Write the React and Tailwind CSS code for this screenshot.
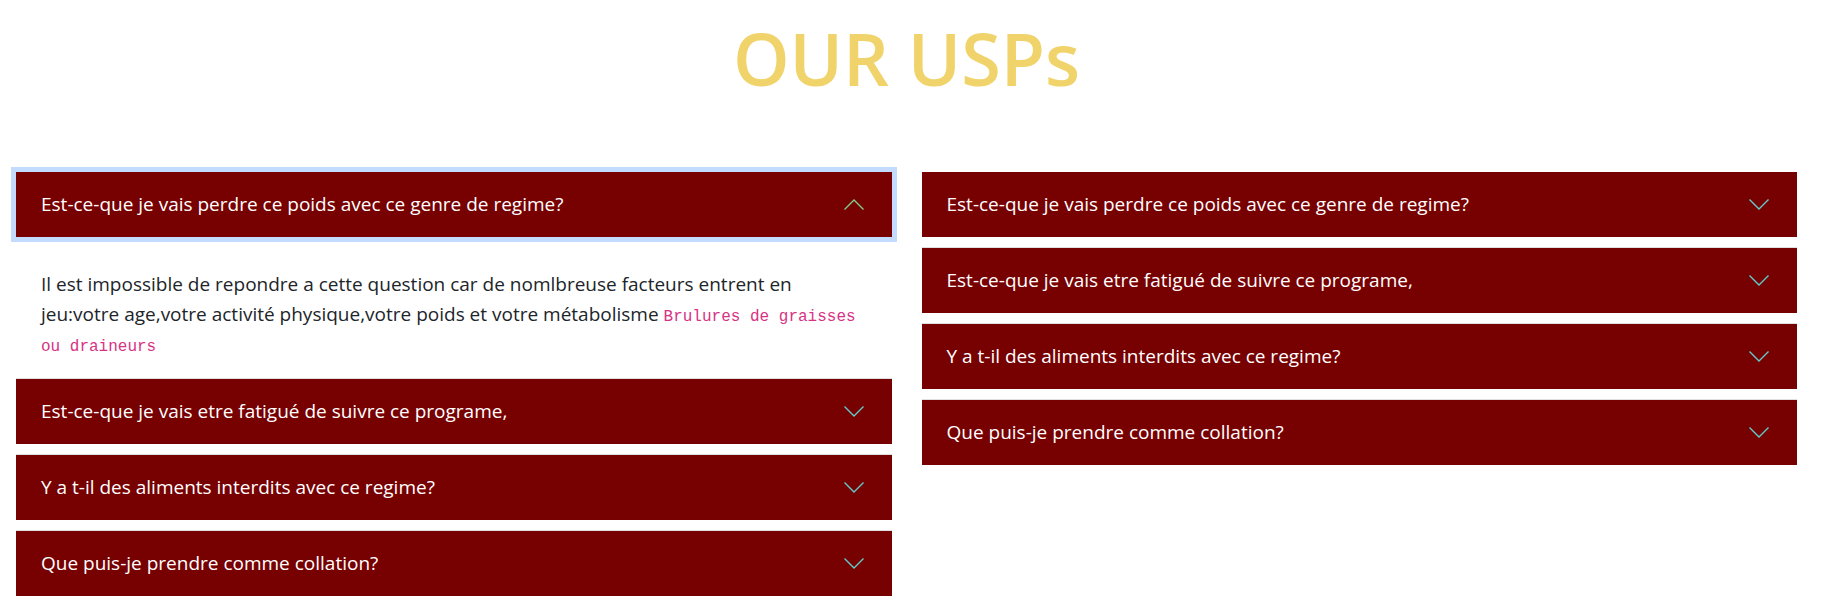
import React, { useState } from 'react';

const leftItems = [
  {
    id: 'l1',
    question: 'Est-ce-que je vais perdre ce poids avec ce genre de regime?',
    answer: 'Il est impossible de repondre a cette question car de nomlbreuse facteurs entrent en jeu:votre age,votre activité physique,votre poids et votre métabolisme',
    code: 'Brulures de graisses ou draineurs'
  },
  { id: 'l2', question: 'Est-ce-que je vais etre fatigué de suivre ce programe,' },
  { id: 'l3', question: 'Y a t-il des aliments interdits avec ce regime?' },
  { id: 'l4', question: 'Que puis-je prendre comme collation?' }
];

const rightItems = [
  { id: 'r1', question: 'Est-ce-que je vais perdre ce poids avec ce genre de regime?' },
  { id: 'r2', question: 'Est-ce-que je vais etre fatigué de suivre ce programe,' },
  { id: 'r3', question: 'Y a t-il des aliments interdits avec ce regime?' },
  { id: 'r4', question: 'Que puis-je prendre comme collation?' }
];

const Chevron = ({ open }) => (
  <svg width="20" height="11" viewBox="0 0 20 11" fill="none" className="shrink-0">
    {open ? (
      <polyline points="0.5,10.5 10,1 19.5,10.5" stroke="#7fcf86" strokeWidth="1.4" />
    ) : (
      <polyline points="0.5,0.5 10,10 19.5,0.5" stroke="#62cccc" strokeWidth="1.4" />
    )}
  </svg>
);

const AccordionItem = ({ item, first, open, onToggle }) => (
  <div className={first ? '' : 'mt-[10px] border-t border-[#dfdfdf]'}>
    <button
      onClick={onToggle}
      className={`relative z-10 flex h-[65px] w-full items-center justify-between bg-[#770000] pl-[25px] pr-[28px] text-left text-[19px] text-white ${
        open ? 'ring-[5px] ring-[#c2dbfe]' : ''
      }`}
    >
      <span>{item.question}</span>
      <Chevron open={open} />
    </button>
    {open && item.answer && (
      <div className="px-[25px] pb-[9px] pt-[32px] text-[19px] leading-[30px] text-[#212529]">
        {item.answer}{' '}
        <code className="font-['Liberation_Mono',monospace] text-[16px] leading-none text-[#d63384]">{item.code}</code>
      </div>
    )}
  </div>
);

const App = () => {
  const [openId, setOpenId] = useState('l1');

  const toggle = (id) => setOpenId(openId === id ? null : id);

  return (
    <div className="min-h-screen bg-white pl-[16px] pr-[39px] font-['Open_Sans',sans-serif]">
      {/* Title */}
      <h1 className="pt-[22px] pb-[78px] text-center text-[72px] font-semibold leading-[72px] text-[#f0d36a]">
        OUR USPs
      </h1>

      {/* FAQ columns */}
      <div className="grid grid-cols-2 gap-[30px]">
        <div className="flex flex-col">
          {leftItems.map((item, index) => (
            <AccordionItem
              key={item.id}
              item={item}
              first={index === 0}
              open={openId === item.id}
              onToggle={() => toggle(item.id)}
            />
          ))}
        </div>
        <div className="flex flex-col">
          {rightItems.map((item, index) => (
            <AccordionItem
              key={item.id}
              item={item}
              first={index === 0}
              open={openId === item.id}
              onToggle={() => toggle(item.id)}
            />
          ))}
        </div>
      </div>
    </div>
  );
};

export default App;
